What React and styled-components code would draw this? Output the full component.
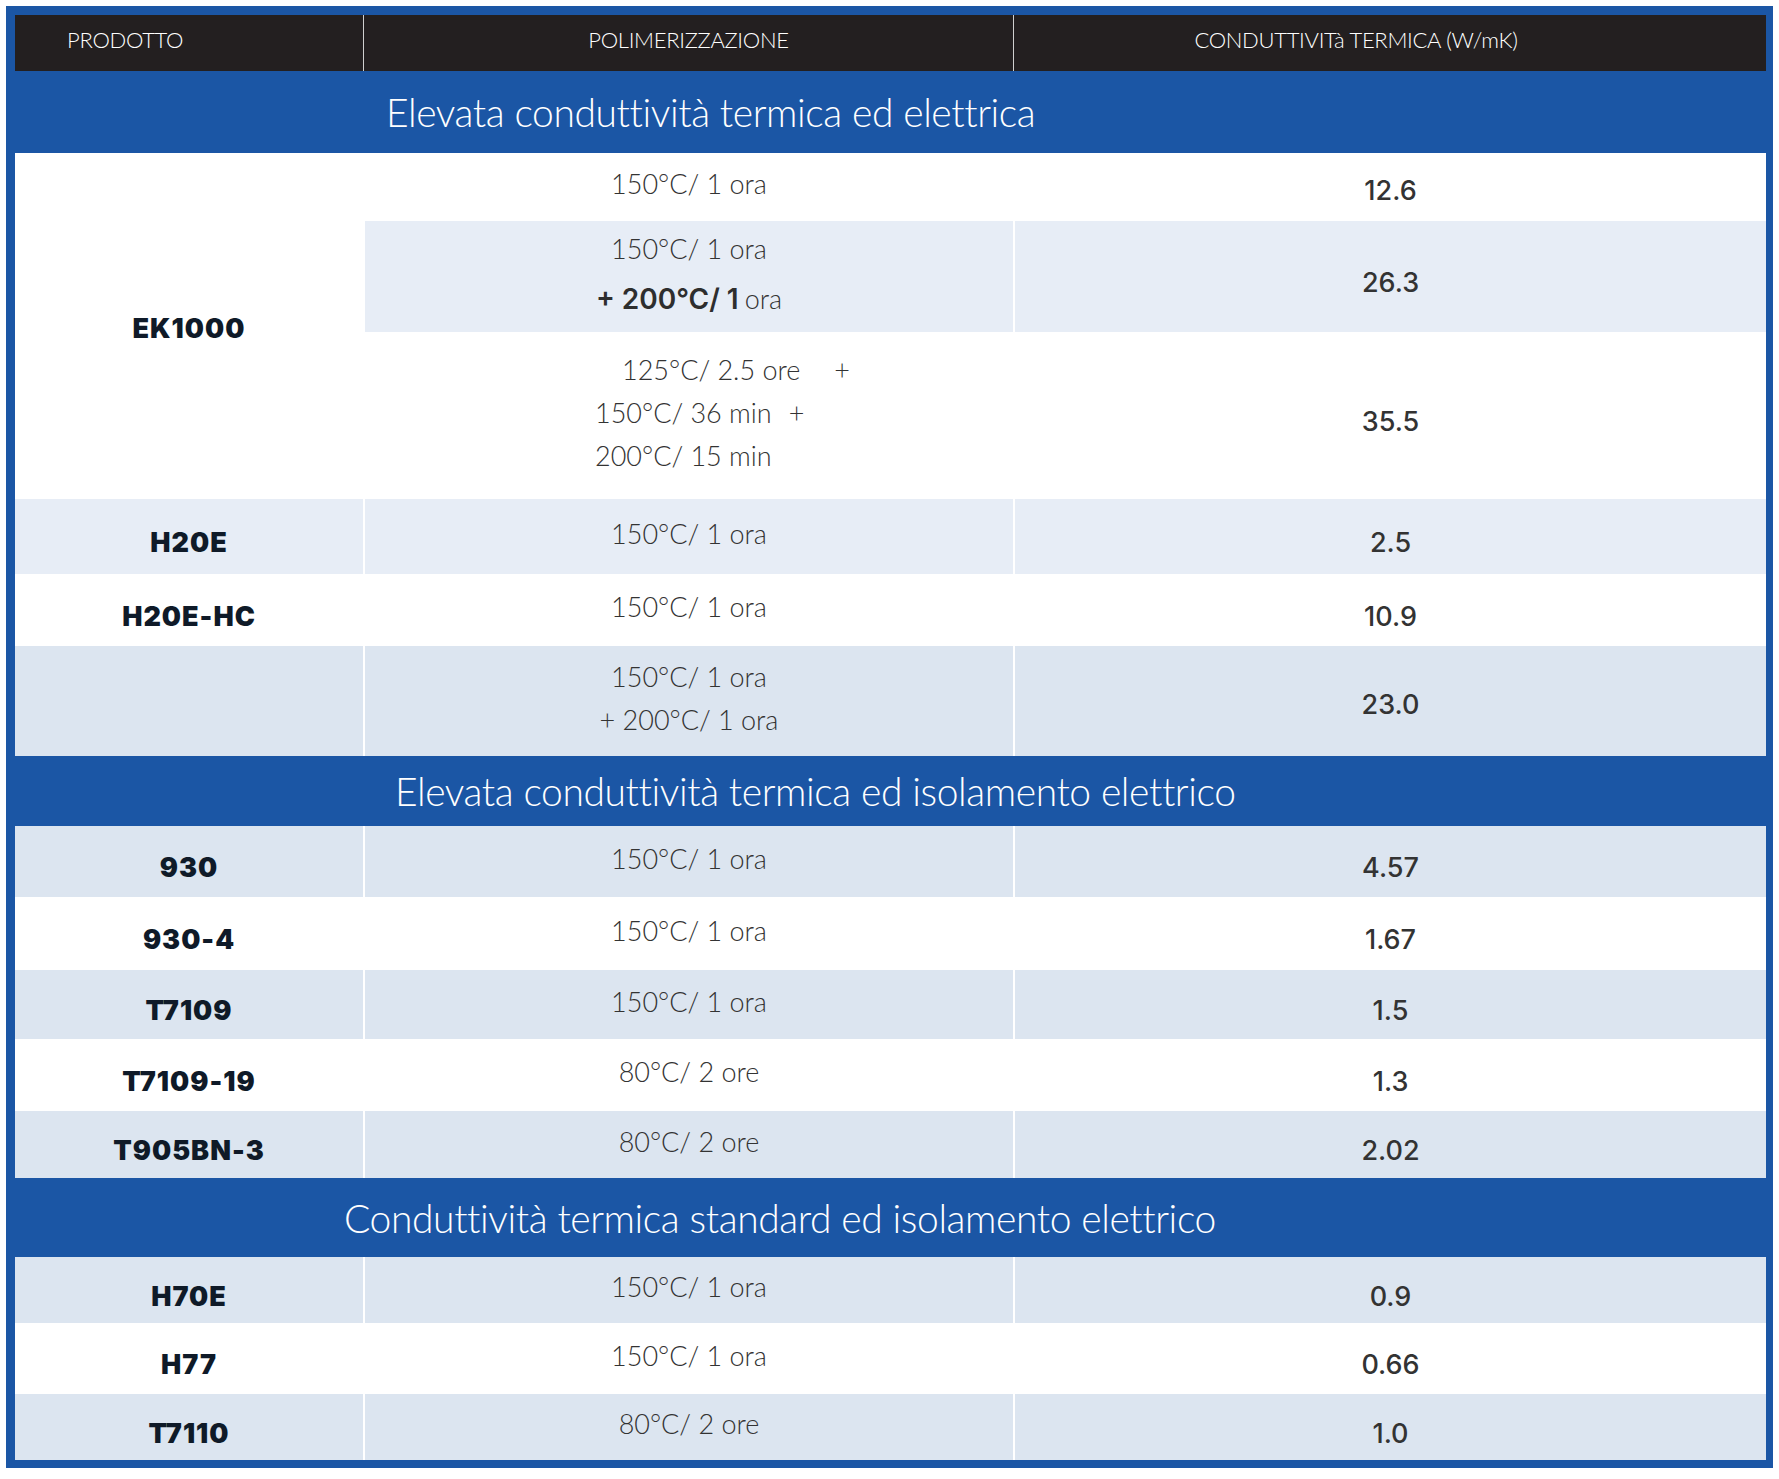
import React from "react";
import styled, { createGlobalStyle } from "styled-components";

const Global = createGlobalStyle`
  html, body { margin: 0; padding: 0; background: #ffffff; }
  * { box-sizing: border-box; }
`;

const BLUE = "#1b56a5";
const TONES = { white: "#ffffff", light: "#e7edf6", mid: "#dce5f0" };

const Frame = styled.div`
  margin: 6px 0 0 6px;
  width: 1767px;
  padding: 9px 7px 8px 9px;
  background: ${BLUE};
`;

const Table = styled.div`
  display: grid;
  grid-template-columns: 348px 650px 753px;
  grid-template-rows: ${(p) => p.$rows};
`;

const HeaderCell = styled.div`
  background: #231f20;
  color: #ffffff;
  font-family: Lato, "Open Sans", sans-serif;
  font-weight: 300;
  font-size: 22px;
  letter-spacing: -0.3px;
  display: flex;
  align-items: center;
  justify-content: ${(p) => (p.$left ? "flex-start" : "center")};
  padding-left: ${(p) => p.$pl || 0}px;
  padding-right: ${(p) => p.$pr || 0}px;
  padding-bottom: 7px;
  border-left: ${(p) => (p.$divider ? "1px solid #cfcfcf" : "none")};
`;

const SectionBar = styled.div`
  grid-column: 1 / -1;
  background: ${BLUE};
  color: #ffffff;
  font-family: Lato, "Open Sans", sans-serif;
  font-weight: 300;
  font-size: 39px;
  letter-spacing: -0.4px;
  display: flex;
  align-items: center;
  padding-left: ${(p) => p.$indent}px;
`;

const Cell = styled.div`
  background: ${(p) => TONES[p.$tone]};
  display: flex;
  align-items: center;
  justify-content: center;
`;

const ProductCell = styled(Cell)`
  grid-row: span ${(p) => p.$span || 1};
  font-family: Inter, "Noto Sans", sans-serif;
  font-weight: 900;
  font-size: 27px;
  letter-spacing: 1px;
  color: #0f1a28;
  padding-top: ${(p) => (p.$span ? 4 : 12)}px;
`;

const PolyCell = styled(Cell)`
  border-left: 2px solid #ffffff;
  font-family: Lato, "Open Sans", sans-serif;
  font-weight: 300;
  font-size: 27px;
  color: #333333;
  text-align: center;
  line-height: ${(p) => p.$lh || 32}px;
  padding-bottom: 6px;
  justify-content: ${(p) => (p.$pl ? "flex-start" : "center")};
  padding-left: ${(p) => p.$pl || 0}px;
`;

const ValueCell = styled(Cell)`
  border-left: 2px solid #ffffff;
  font-family: Inter, "Noto Sans", sans-serif;
  font-weight: 500;
  font-size: 27px;
  color: #333333;
  padding-top: ${(p) => (p.$tight ? 6 : 12)}px;
`;

const Lines = styled.div`
  display: flex;
  flex-direction: column;
  align-items: ${(p) => (p.$left ? "flex-start" : "center")};
`;

const Line = styled.div`
  padding-left: ${(p) => p.$indent || 0}px;
  white-space: nowrap;
`;

const Strong = styled.span`
  font-family: Inter, "Noto Sans", sans-serif;
  font-weight: 600;
  font-size: 28px;
  color: #2e2e2e;
  margin-right: 6px;
`;

const Plus = styled.span`
  margin-left: ${(p) => p.$gap}px;
`;

const heights = [56, 82, 68, 111, 167, 75, 72, 110, 70, 71, 73, 69, 72, 67, 79, 66, 71, 66];

const simple = (product, poly, value, tone) => ({ product, poly, value, tone });

const section2 = [
  simple("930", "150°C/ 1 ora", "4.57", "mid"),
  simple("930-4", "150°C/ 1 ora", "1.67", "white"),
  simple("T7109", "150°C/ 1 ora", "1.5", "mid"),
  simple("T7109-19", "80°C/ 2 ore", "1.3", "white"),
  simple("T905BN-3", "80°C/ 2 ore", "2.02", "mid"),
];

const section3 = [
  simple("H70E", "150°C/ 1 ora", "0.9", "mid"),
  simple("H77", "150°C/ 1 ora", "0.66", "white"),
  simple("T7110", "80°C/ 2 ore", "1.0", "mid"),
];

function SimpleRow({ r }) {
  return (
    <>
      <ProductCell $tone={r.tone}>{r.product}</ProductCell>
      <PolyCell $tone={r.tone}>{r.poly}</PolyCell>
      <ValueCell $tone={r.tone}>{r.value}</ValueCell>
    </>
  );
}

export default function App() {
  return (
    <>
      <Global />
      <Frame>
        <Table $rows={heights.map((h) => `${h}px`).join(" ")}>
          <HeaderCell $left $pl={52}>PRODOTTO</HeaderCell>
          <HeaderCell $divider>POLIMERIZZAZIONE</HeaderCell>
          <HeaderCell $divider $pr={68}>CONDUTTIVITà TERMICA (W/mK)</HeaderCell>

          <SectionBar $indent={371}>Elevata conduttività termica ed elettrica</SectionBar>

          <ProductCell $tone="white" $span={3}>EK1000</ProductCell>
          <PolyCell $tone="white">150°C/ 1 ora</PolyCell>
          <ValueCell $tone="white" $tight>12.6</ValueCell>

          <PolyCell $tone="light" $lh={50}>
            <Lines>
              <Line>150°C/ 1 ora</Line>
              <Line>
                <Strong>+ 200°C/ 1</Strong>ora
              </Line>
            </Lines>
          </PolyCell>
          <ValueCell $tone="light">26.3</ValueCell>

          <PolyCell $tone="white" $lh={43} $pl={230}>
            <Lines $left>
              <Line $indent={27}>
                125°C/ 2.5 ore<Plus $gap={34}>+</Plus>
              </Line>
              <Line>
                150°C/ 36 min<Plus $gap={17}>+</Plus>
              </Line>
              <Line>200°C/ 15 min</Line>
            </Lines>
          </PolyCell>
          <ValueCell $tone="white">35.5</ValueCell>

          <SimpleRow r={simple("H20E", "150°C/ 1 ora", "2.5", "light")} />
          <SimpleRow r={simple("H20E-HC", "150°C/ 1 ora", "10.9", "white")} />

          <ProductCell $tone="mid" />
          <PolyCell $tone="mid" $lh={43}>
            <Lines>
              <Line>150°C/ 1 ora</Line>
              <Line>+ 200°C/ 1 ora</Line>
            </Lines>
          </PolyCell>
          <ValueCell $tone="mid" $tight>23.0</ValueCell>

          <SectionBar $indent={380}>
            Elevata conduttività termica ed isolamento elettrico
          </SectionBar>
          {section2.map((r) => (
            <SimpleRow key={r.product} r={r} />
          ))}

          <SectionBar $indent={329}>
            Conduttività termica standard ed isolamento elettrico
          </SectionBar>
          {section3.map((r) => (
            <SimpleRow key={r.product} r={r} />
          ))}
        </Table>
      </Frame>
    </>
  );
}
